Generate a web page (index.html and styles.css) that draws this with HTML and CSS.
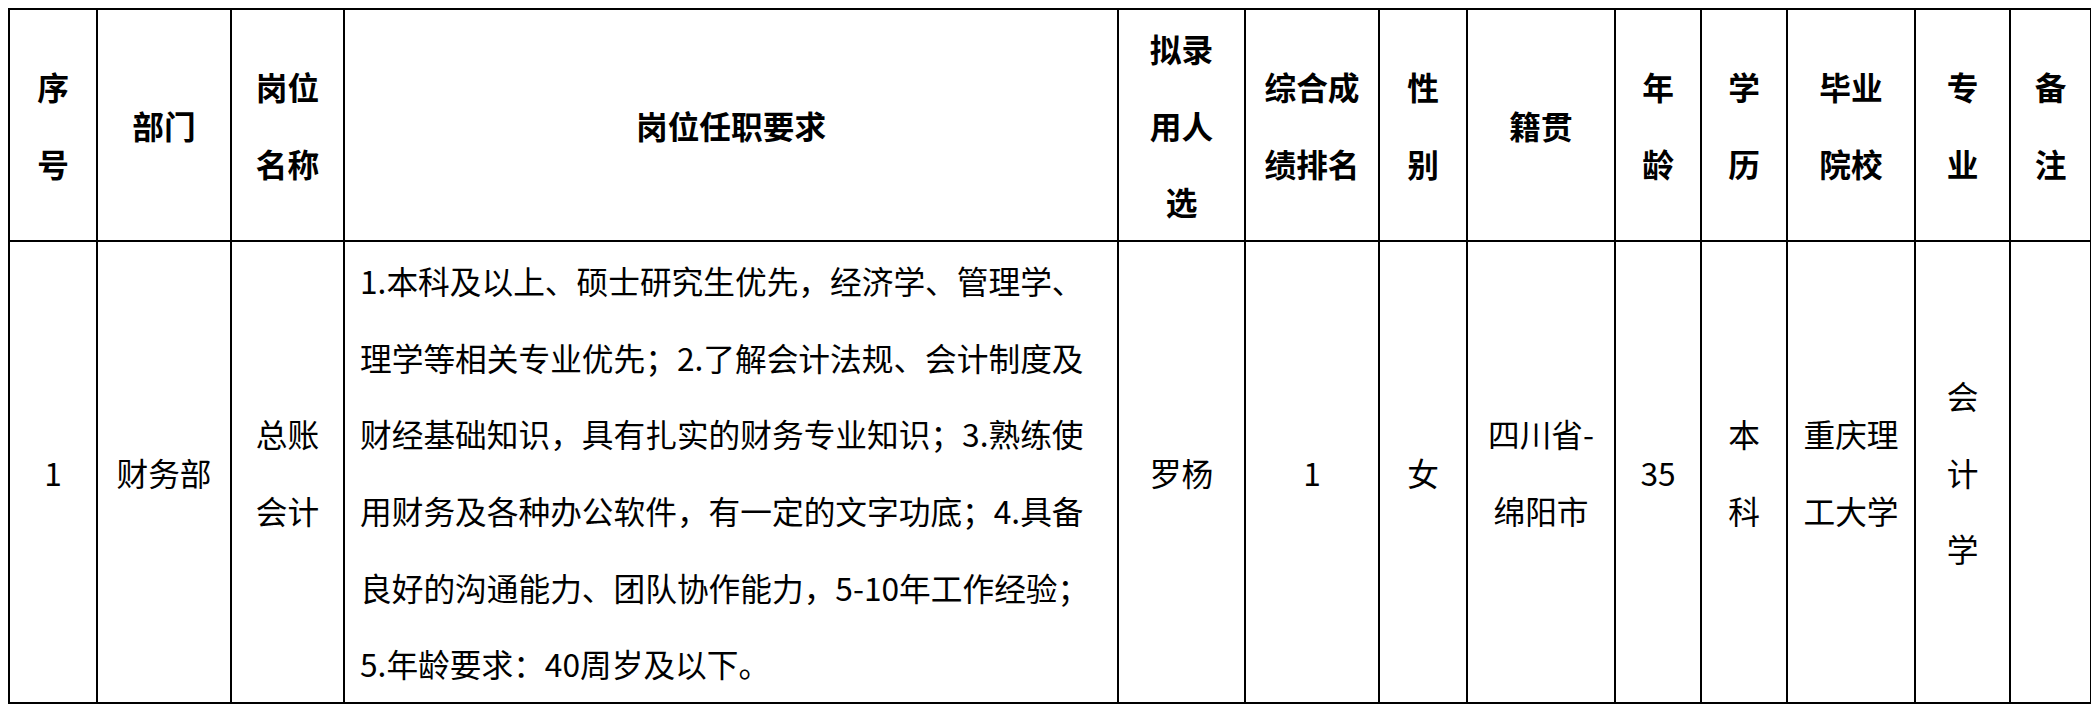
FILE: index.html
```html
<!DOCTYPE html>
<html lang="zh-CN">
<head>
<meta charset="utf-8">
<title>拟录用人选公示</title>
<link rel="stylesheet" href="styles.css">
</head>
<body>
<table class="roster">
  <colgroup>
    <col class="c-no">
    <col class="c-dept">
    <col class="c-post">
    <col class="c-req">
    <col class="c-name">
    <col class="c-rank">
    <col class="c-sex">
    <col class="c-origin">
    <col class="c-age">
    <col class="c-edu">
    <col class="c-school">
    <col class="c-major">
    <col class="c-note">
  </colgroup>
  <thead>
    <tr class="head-row">
      <th>序<br>号</th>
      <th>部门</th>
      <th>岗位<br>名称</th>
      <th>岗位任职要求</th>
      <th>拟录<br>用人<br>选</th>
      <th>综合成<br>绩排名</th>
      <th>性<br>别</th>
      <th>籍贯</th>
      <th>年<br>龄</th>
      <th>学<br>历</th>
      <th>毕业<br>院校</th>
      <th>专<br>业</th>
      <th>备<br>注</th>
    </tr>
  </thead>
  <tbody>
    <tr class="body-row">
      <td>1</td>
      <td>财务部</td>
      <td>总账<br>会计</td>
      <td class="req">1.本科及以上、硕士研究生优先，经济学、管理学、<br>理学等相关专业优先；2.了解会计法规、会计制度及<br>财经基础知识，具有扎实的财务专业知识；3.熟练使<br>用财务及各种办公软件，有一定的文字功底；4.具备<br>良好的沟通能力、团队协作能力，5-10年工作经验；<br>5.年龄要求：40周岁及以下。</td>
      <td>罗杨</td>
      <td>1</td>
      <td>女</td>
      <td>四川省-<br>绵阳市</td>
      <td>35</td>
      <td>本<br>科</td>
      <td>重庆理<br>工大学</td>
      <td>会<br>计<br>学</td>
      <td></td>
    </tr>
  </tbody>
</table>
</body>
</html>
```

FILE: styles.css
```css
html, body {
  background: #ffffff;
}

body {
  margin: 8px;
  font-family: "Noto Sans CJK SC", "Microsoft YaHei", "Noto Sans", sans-serif;
  color: #000000;
}

.roster {
  border-collapse: collapse;
  table-layout: fixed;
  width: 2084px;
  border: 2px solid #000;
}

.c-no { width: 88px; }
.c-dept { width: 134px; }
.c-post { width: 113px; }
.c-req { width: 774px; }
.c-name { width: 127px; }
.c-rank { width: 134px; }
.c-sex { width: 88px; }
.c-origin { width: 148px; }
.c-age { width: 86px; }
.c-edu { width: 86px; }
.c-school { width: 128px; }
.c-major { width: 95px; }
.c-note { width: 81px; }

.roster th,
.roster td {
  border: 2px solid #000;
  padding: 0;
  text-align: center;
  vertical-align: middle;
  font-size: 31.7px;
  line-height: 76.67px;
  white-space: nowrap;
  overflow: hidden;
}

.roster th {
  font-weight: 700;
}

.roster td {
  font-weight: 400;
}

.head-row th {
  height: 230px;
}

.body-row td {
  height: 460px;
}

.roster td.req {
  text-align: left;
  padding-left: 15px;
}
```
